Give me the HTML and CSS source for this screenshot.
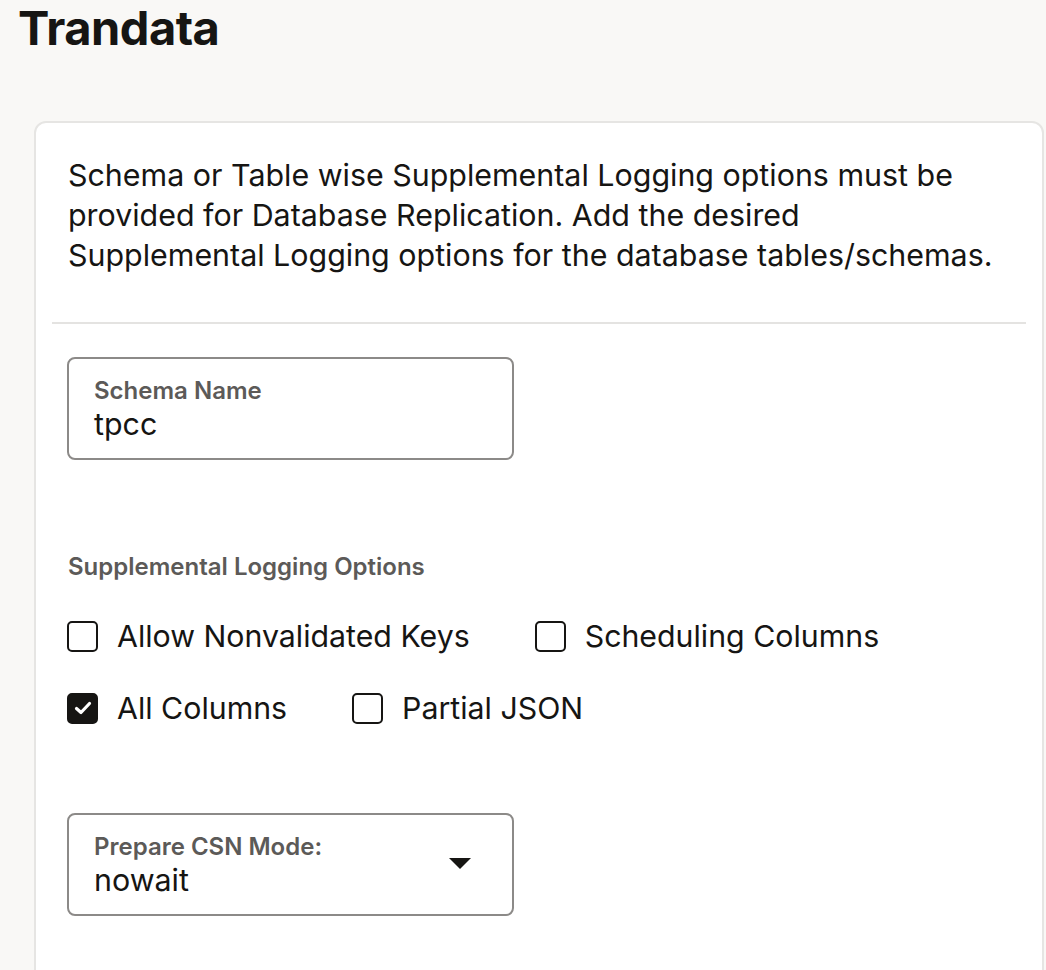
FILE: index.html
```html
<!DOCTYPE html>
<html>
<head>
<meta charset="utf-8">
<link rel="stylesheet" href="styles.css">
</head>
<body>
<div class="page">
  <h1 class="title">Trandata</h1>
  <div class="card">
    <p class="desc">Schema or Table wise Supplemental Logging options must be provided for Database Replication. Add the desired Supplemental Logging options for the database tables/schemas.</p>
    <hr class="sep">
    <div class="body">
      <div class="field">
        <div class="field-label">Schema Name</div>
        <div class="field-value">tpcc</div>
      </div>
      <div class="group-label">Supplemental Logging Options</div>
      <div class="checks">
        <div class="check-row">
          <label class="check"><span class="box"></span><span>Allow Nonvalidated Keys</span></label>
          <label class="check"><span class="box"></span><span>Scheduling Columns</span></label>
        </div>
        <div class="check-row">
          <label class="check"><span class="box checked"><svg viewBox="0 0 26 26" width="26" height="26"><path d="M6.5 13.5 L11 17.5 L19.5 8.5" fill="none" stroke="#fff" stroke-width="3.2" stroke-linecap="round" stroke-linejoin="round"/></svg></span><span>All Columns</span></label>
          <label class="check"><span class="box"></span><span>Partial JSON</span></label>
        </div>
      </div>
      <div class="field select">
        <div class="field-text">
          <div class="field-label">Prepare CSN Mode:</div>
          <div class="field-value">nowait</div>
        </div>
        <svg class="caret" viewBox="0 0 22 12" width="22" height="12"><path d="M0 0 H22 L11 11 Z" fill="#161513"/></svg>
      </div>
    </div>
  </div>
</div>
</body>
</html>
```

FILE: styles.css
```css
* { box-sizing: border-box; }
html, body { margin: 0; padding: 0; }
body {
  background: #f9f8f6;
  font-family: Inter, "Noto Sans", sans-serif;
  color: #161513;
  width: 1046px;
  height: 970px;
  overflow: hidden;
}
.page {
  padding: 0 0 0 18px;
}
.title {
  margin: 0;
  font-size: 47px;
  font-weight: 700;
  line-height: 56px;
  letter-spacing: -0.5px;
}
.card {
  margin: 65px 0 0 16px;
  width: 1010px;
  height: 900px;
  background: #fff;
  border: 2px solid #e6e5e3;
  border-radius: 12px;
  padding: 32px 16px 0 16px;
}
.desc {
  margin: 0;
  padding: 0 0 0 16px;
  max-width: 952px;
  font-size: 30.4px;
  line-height: 40px;
  color: #161513;
}
.sep {
  margin: 47px 0 0 0;
  border: 0;
  border-top: 2px solid #e4e3e1;
  height: 0;
}
.body {
  padding: 33px 16px 0 15px;
}
.field {
  width: 447px;
  height: 103px;
  border: 2px solid #8c8a88;
  border-radius: 8px;
  padding: 18px 25px 0 25px;
}
.field-label {
  font-size: 24px;
  font-weight: 600;
  color: #5c5a58;
  line-height: 28px;
}
.field-value {
  font-size: 30.4px;
  line-height: 38px;
  color: #161513;
}
.group-label {
  margin-top: 93px;
  font-size: 24px;
  font-weight: 600;
  color: #5c5a58;
  line-height: 28px;
  padding-left: 1px;
}
.checks {
  margin-top: 39px;
  display: flex;
  flex-direction: column;
  gap: 40px;
}
.check-row {
  display: flex;
  column-gap: 65px;
}
.check {
  display: flex;
  align-items: center;
  gap: 19px;
  font-size: 30.3px;
  line-height: 32px;
  height: 32px;
}
.box {
  width: 31px;
  height: 31px;
  border: 2.5px solid #161513;
  border-radius: 5px;
  display: flex;
  align-items: center;
  justify-content: center;
  flex: none;
}
.box.checked {
  background: #161513;
}
.box svg { display: block; }
.select {
  margin-top: 89px;
  display: flex;
  align-items: flex-start;
  justify-content: space-between;
}
.caret {
  margin-top: 25px;
  margin-right: 16px;
}
```
